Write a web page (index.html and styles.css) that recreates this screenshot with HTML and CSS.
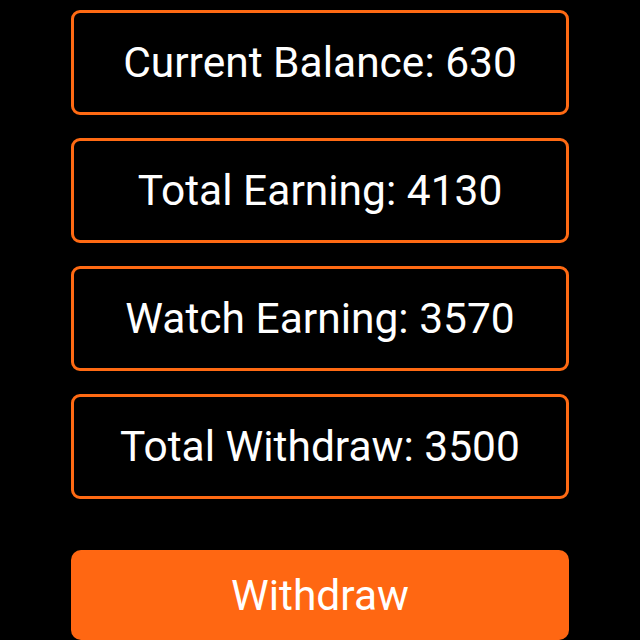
FILE: index.html
```html
<!DOCTYPE html>
<html lang="en">
<head>
    <meta charset="UTF-8">
    <meta name="viewport" content="width=device-width, initial-scale=1.0">
    <title>Wallet</title>
    <link rel="stylesheet" href="styles.css">
</head>
<body>
    <div id="wallet">
        <div class="stat-box">Current Balance: 630</div>
        <div class="stat-box">Total Earning: 4130</div>
        <div class="stat-box">Watch Earning: 3570</div>
        <div class="stat-box">Total Withdraw: 3500</div>

        <button type="button" id="withdraw-btn">Withdraw</button>
    </div>
</body>
</html>
```

FILE: styles.css
```css
body {
    font-family: 'Roboto', 'Liberation Sans', sans-serif;
    background-color: #000000;
    margin: 0;
    padding: 10px 0 0;
    overflow: hidden;
}

#wallet {
    width: 498px;
    margin: 0 auto;
    display: flex;
    flex-direction: column;
    gap: 23px;
}

.stat-box {
    box-sizing: border-box;
    height: 105px;
    border: 3px solid #ff6a13;
    border-radius: 9px;
    color: #ffffff;
    font-size: 42.5px;
    display: flex;
    align-items: center;
    justify-content: center;
}

#withdraw-btn {
    margin-top: 28px;
    height: 90px;
    border: none;
    border-radius: 10px;
    background-color: #ff6712;
    color: #ffffff;
    font-family: inherit;
    font-size: 42.5px;
    flex-shrink: 0;
}
```
